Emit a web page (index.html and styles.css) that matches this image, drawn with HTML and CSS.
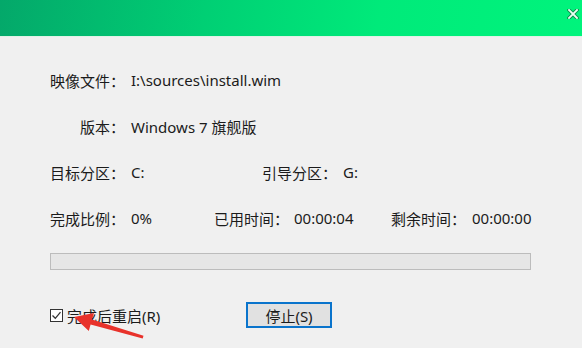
FILE: index.html
```html
<!DOCTYPE html>
<html lang="zh-CN">
<head>
  <meta charset="UTF-8">
  <title>安装</title>
  <link rel="stylesheet" href="styles.css">
</head>
<body>

<header class="titlebar">
  <span class="close-btn">
    <svg width="12" height="10" viewBox="0 0 12 10">
      <path d="M2 1 L10 9 M10 1 L2 9" stroke="#0a8a4a" stroke-width="3.6" stroke-linecap="square"/>
      <path d="M2 1 L10 9 M10 1 L2 9" stroke="#e8fff0" stroke-width="1.8" stroke-linecap="square"/>
    </svg>
  </span>
</header>

<main class="panel">
  <div class="row">
    <span class="label">映像文件：</span>
    <span class="value">I:\sources\install.wim</span>
  </div>
  <div class="row">
    <span class="label">版本：</span>
    <span class="value">Windows 7 旗舰版</span>
  </div>
  <div class="row">
    <span class="label">目标分区：</span>
    <span class="value v-target">C:</span>
    <span class="label2 l-boot">引导分区：</span>
    <span class="value">G:</span>
  </div>
  <div class="row">
    <span class="label">完成比例：</span>
    <span class="value v-percent">0%</span>
    <span class="label2 l-used">已用时间：</span>
    <span class="value v-used">00:00:04</span>
    <span class="label2 l-left">剩余时间：</span>
    <span class="value">00:00:00</span>
  </div>

  <div class="progress"><div class="progress-fill"></div></div>

  <div class="bottom-row">
    <label class="reboot">
      <span class="checkbox">
        <svg width="11" height="11" viewBox="0 0 11 11">
          <path d="M1.5 5.5 L4.3 8.3 L9.5 2.2" fill="none" stroke="#333" stroke-width="1.3"/>
        </svg>
      </span>
      完成后重启(R)
    </label>
    <button class="stop-btn">停止(S)</button>
  </div>
</main>

<svg class="arrow" width="582" height="348" viewBox="0 0 582 348">
  <polygon points="74,317 94,313 92,319.6 143.5,335.8 142.7,338.4 90.6,324.6 88.8,331" fill="#e8322b"/>
</svg>

</body>
</html>
```

FILE: styles.css
```css
body {
  margin: 0;
  background-color: #f0f0f0;
  color: #1b1b1b;
  font-family: "Microsoft YaHei", "Noto Sans", "Noto Sans CJK SC", sans-serif;
  font-size: 15px;
  width: 582px;
  height: 348px;
  overflow: hidden;
  position: relative;
}

.titlebar {
  height: 37px;
  background: linear-gradient(100deg, #04a86a 0%, #00cf74 35%, #00ea7a 65%, #00f47c 100%);
  border-bottom: 1px solid #dff2e6;
  box-sizing: border-box;
  display: flex;
  justify-content: flex-end;
}

.close-btn {
  margin: 3px 3px 0 0;
  width: 12px;
  height: 10px;
}

.panel {
  padding: 20px 0 0 50px;
}

.row {
  display: flex;
  height: 46px;
  align-items: center;
  white-space: nowrap;
}

.label {
  width: 75px;
  margin-right: 6px;
  text-align: right;
}

.label2 {
  white-space: nowrap;
}

.v-target {
  width: 131px;
}

.l-boot {
  width: 81px;
}

.v-percent {
  width: 83px;
}

.l-used {
  width: 80px;
}

.v-used {
  width: 97px;
}

.l-left {
  width: 81px;
}

.progress {
  margin-top: 12px;
  width: 481px;
  height: 17px;
  box-sizing: border-box;
  border: 1px solid #bcbcbc;
  background-color: #e6e6e6;
}

.bottom-row {
  display: flex;
  align-items: center;
  margin-top: 31px;
  height: 28px;
}

.reboot {
  width: 196px;
  display: flex;
  align-items: center;
  gap: 4px;
}

.checkbox {
  width: 13px;
  height: 13px;
  box-sizing: border-box;
  border: 1px solid #333;
  background-color: #fff;
  display: flex;
  align-items: center;
  justify-content: center;
}

.stop-btn {
  width: 86px;
  height: 26px;
  box-sizing: border-box;
  border: 2px solid #0a74cc;
  background-color: #e1e1e1;
  font-family: inherit;
  font-size: 15px;
  color: #1b1b1b;
  padding: 0;
}

.arrow {
  position: absolute;
  left: 0;
  top: 0;
  pointer-events: none;
}
```
